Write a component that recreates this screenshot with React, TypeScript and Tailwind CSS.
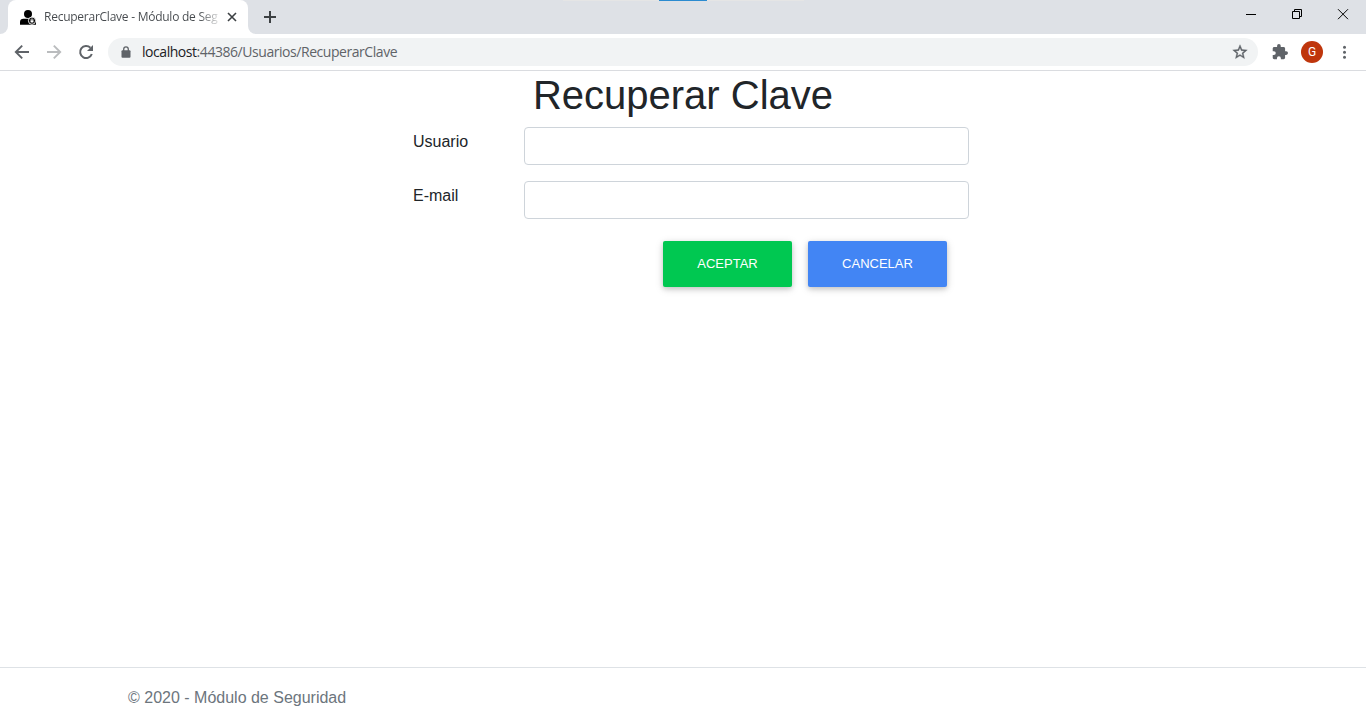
import React from "react";

function UserLockIcon() {
  return (
    <svg className="h-4 w-4 shrink-0" viewBox="0 0 16 16">
      <circle cx="8" cy="4.9" r="4" fill="#000" />
      <path d="M0 15.8V13c0-2 1.4-3.2 3.4-3.2h8.2L16 12v3.8z" fill="#000" />
      <circle cx="12" cy="11.7" r="3.6" fill="#000" stroke="#fff" strokeWidth=".9" />
      <path d="M11 11.4v-.6a1 1 0 0 1 2 0v.6" fill="none" stroke="#fff" strokeWidth=".8" />
      <rect x="10.5" y="11.2" width="3" height="2.3" rx=".4" fill="#fff" />
    </svg>
  );
}

function TitleBar() {
  return (
    <div className="relative flex h-[34px] bg-[#dee1e6]">
      <div className="absolute top-0 left-[563px] h-px w-[241px] bg-[#e5e5e5]" />
      <div className="absolute top-0 left-[659px] h-px w-12 bg-[#2b8bd0]" />
      <div className="flex w-2 items-end bg-white">
        <div className="h-full w-2 rounded-br-lg bg-[#dee1e6]" />
      </div>
      <div className="flex w-60 items-center rounded-t-lg bg-white pl-3">
        <UserLockIcon />
        <div className="ml-2 w-[176px] bg-linear-to-r from-[#45494d] from-88% to-[#45494d]/10 bg-clip-text font-['Open_Sans',sans-serif] text-xs tracking-[-0.25px] whitespace-nowrap text-transparent">
          RecuperarClave - Módulo de Seg
        </div>
        <svg className="ml-[3px] h-4 w-4" viewBox="0 0 16 16" stroke="#3c4043" strokeWidth="1.6">
          <path d="M5 4l8 8M13 4l-8 8" />
        </svg>
      </div>
      <div className="w-2 bg-white">
        <div className="h-full w-2 rounded-bl-lg bg-[#dee1e6]" />
      </div>
      <svg className="mt-2 ml-[5px] h-[18px] w-[18px]" viewBox="0 0 18 18" stroke="#3c4043" strokeWidth="2">
        <path d="M9 3v12M3 9h12" />
      </svg>
      <div className="ml-auto flex">
        <svg className="h-[30px] w-[46px]" viewBox="0 0 46 30" stroke="#000">
          <path d="M18 14.5h10" />
        </svg>
        <svg className="h-[30px] w-[46px]" viewBox="0 0 46 30" fill="none" stroke="#000">
          <path d="M18.5 11.5h7v7h-7zM20.5 11.5v-2h7v7h-2" />
        </svg>
        <svg className="h-[30px] w-[46px]" viewBox="0 0 46 30" stroke="#000">
          <path d="M18 9.2l10 10M28 9.2l-10 10" />
        </svg>
      </div>
    </div>
  );
}

function Toolbar() {
  return (
    <div className="flex h-[37px] items-center border-b border-[#dadce0] bg-white pl-[14px]">
      <svg className="h-4 w-4" viewBox="0 0 16 16" fill="none" stroke="#5f6368" strokeWidth="1.9">
        <path d="M15 8H2M8.2 1.6L1.8 8l6.4 6.4" />
      </svg>
      <svg className="ml-4 h-4 w-4" viewBox="0 0 16 16" fill="none" stroke="#babcbe" strokeWidth="1.9">
        <path d="M1 8h13M7.8 1.6L14.2 8l-6.4 6.4" />
      </svg>
      <svg className="ml-4 h-4 w-4" viewBox="0 0 16 16">
        <path d="M13.8 10A6 6 0 1 1 12.4 3.8" fill="none" stroke="#5f6368" strokeWidth="2" />
        <path d="M15 1v6H9z" fill="#5f6368" />
      </svg>
      <div className="ml-[14px] flex h-7 w-[1150px] items-center rounded-full bg-[#f1f3f4] pr-[10px] pl-[13px]">
        <svg className="h-3 w-[10px]" viewBox="0 0 10 12">
          <path d="M2.7 5V3.2a2.3 2.3 0 0 1 4.6 0V5" fill="none" stroke="#5f6368" strokeWidth="1.3" />
          <rect x=".5" y="4.3" width="9" height="7.4" rx="1" fill="#5f6368" />
        </svg>
        <div className="ml-[11px] font-['Open_Sans',sans-serif] text-sm tracking-[-0.45px] whitespace-nowrap text-[#5f6368]">
          <span className="text-[#202124]">localhost</span>:44386/Usuarios/RecuperarClave
        </div>
        <svg className="ml-auto h-4 w-4" viewBox="1 1 22 22" fill="#5f6368" stroke="#5f6368" strokeWidth=".5">
          <path d="M22 9.24l-7.19-.62L12 2 9.19 8.63 2 9.24l5.46 4.73L5.82 21 12 17.27 18.18 21l-1.63-7.03L22 9.24zM12 15.4l-3.76 2.27 1-4.28-3.32-2.88 4.38-.38L12 6.1l1.71 4.04 4.38.38-3.32 2.88 1 4.28L12 15.4z" />
        </svg>
      </div>
      <svg className="ml-[14px] h-4 w-4" viewBox="1 1 22 22" fill="#5f6368">
        <path d="M20.5 11H19V7c0-1.1-.9-2-2-2h-4V3.5a2.5 2.5 0 0 0-5 0V5H4c-1.1 0-2 .9-2 2v3.8h1.5a2.7 2.7 0 0 1 0 5.4H2V20c0 1.1.9 2 2 2h3.8v-1.5a2.7 2.7 0 0 1 5.4 0V22H17c1.1 0 2-.9 2-2v-4h1.5a2.5 2.5 0 0 0 0-5z" />
      </svg>
      <div className="ml-[13px] flex h-[22px] w-[22px] items-center justify-center rounded-full bg-[#bf360c] font-[Roboto,sans-serif] text-xs text-white">
        G
      </div>
      <svg className="ml-[14px] h-4 w-4" viewBox="0 0 16 16" fill="#5f6368">
        <circle cx="7.5" cy="3.2" r="1.5" />
        <circle cx="7.5" cy="8.2" r="1.5" />
        <circle cx="7.5" cy="13.2" r="1.5" />
      </svg>
    </div>
  );
}

function Field({ id, label }: { id: string; label: string }) {
  return (
    <div className="mb-4 flex">
      <label htmlFor={id} className="w-[111px] pt-[3px] leading-6 text-[#212529]">
        {label}
      </label>
      <input id={id} className="h-[38px] w-[445px] rounded border border-[#ced4da] bg-white px-3 outline-none" />
    </div>
  );
}

const shadow =
  "shadow-[0_2px_5px_0_rgba(0,0,0,0.16),0_2px_10px_0_rgba(0,0,0,0.12)]";

export default function App() {
  return (
    <div className="flex h-[728px] w-[1366px] flex-col overflow-hidden bg-white font-['Liberation_Sans',Arial,sans-serif] text-base">
      <TitleBar />
      <Toolbar />
      <main className="flex-1">
        <h1 className="mb-2 text-center text-[40px] leading-[48px] text-[#212529]">Recuperar Clave</h1>
        <form className="ml-[413px] w-[556px]" onSubmit={(e) => e.preventDefault()}>
          <Field id="usuario" label="Usuario" />
          <Field id="email" label="E-mail" />
          <div className="flex justify-end gap-4 pt-[6px] pr-[22px]">
            <button className={`h-[46px] w-[129px] rounded-xs bg-[#00c851] text-[13px] text-white ${shadow}`}>
              ACEPTAR
            </button>
            <button className={`h-[46px] w-[139px] rounded-xs bg-[#4285f4] text-[13px] text-white ${shadow}`}>
              CANCELAR
            </button>
          </div>
        </form>
      </main>
      <footer className="h-[61px] border-t border-[#dee2e6] pl-32 leading-[60px] text-[#6c757d]">
        © 2020 - Módulo de Seguridad
      </footer>
    </div>
  );
}
